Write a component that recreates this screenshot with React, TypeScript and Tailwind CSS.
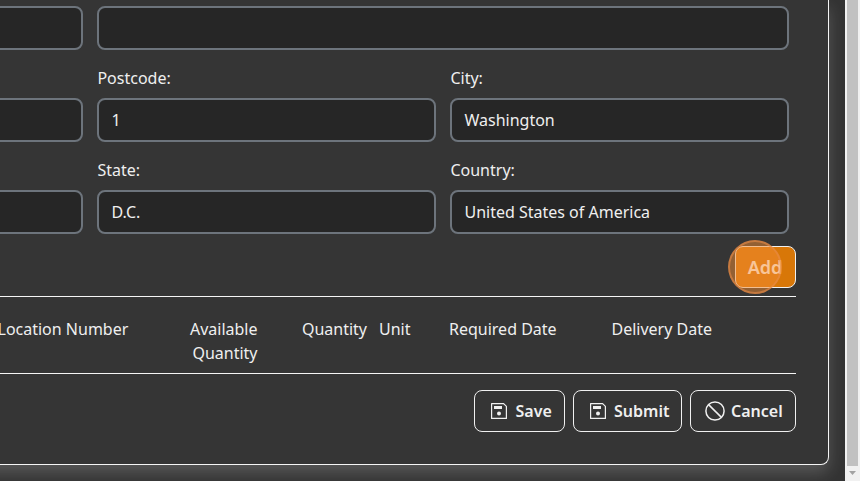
import React from "react";

function TextField({ label, value, className = "" }: { label?: string; value?: string; className?: string }) {
  return (
    <div className={className}>
      <div className="mb-2 h-6 whitespace-nowrap pl-[0.45px] leading-6">{label}</div>
      <div className="flex h-11 items-center rounded-lg border-2 border-[#6d747c] bg-[#262626] pr-3 pl-[12.45px]">{value}</div>
    </div>
  );
}

function SaveIcon() {
  return (
    <svg width="16" height="16" viewBox="0 0 16 16" fill="none" className="shrink-0">
      <path d="M.6 .6H12.6L15.4 3.4V15.4H.6Z" stroke="#f0f0f0" strokeWidth="1.2" strokeLinejoin="round" />
      <path d="M3 3h8v3H3z" fill="#f0f0f0" />
      <circle cx="8" cy="10.5" r="2" fill="#f0f0f0" />
    </svg>
  );
}

function CancelIcon() {
  return (
    <svg width="20" height="20" viewBox="0 0 20 20" fill="none" className="shrink-0">
      <circle cx="10" cy="10" r="9.1" stroke="#f0f0f0" strokeWidth="1.5" />
      <path d="M3.6 3.6 16.4 16.4" stroke="#f0f0f0" strokeWidth="1.5" />
    </svg>
  );
}

const button = "flex h-[42px] items-center rounded-lg border border-[#f0f0f0] font-semibold";

export default function App() {
  return (
    <div className="flex h-[481px] w-[860px] overflow-hidden bg-[#333333] font-['Noto_Sans',sans-serif] text-base leading-6 text-[#efefef]">
      <div className="h-full w-[845px] overflow-hidden">
        <main className="-ml-5 h-[465px] w-[849px] rounded-br-lg border-r border-b border-[#f5f5f5] bg-[#353535] pl-5 shadow-[0_8px_16px_rgba(255,255,255,0.18)]">
          <div className="w-[796px]">
            <div className="flex gap-3.5 pt-1.5">
              <div className="-ml-5 h-11 w-[103px] rounded-lg border-2 border-[#6d747c] bg-[#262626]" />
              <div className="h-11 w-[692px] rounded-lg border-2 border-[#6d747c] bg-[#262626]" />
            </div>
            <div className="mt-4 flex gap-3.5">
              <TextField className="-ml-5 w-[103px]" />
              <TextField className="w-[339px]" label="Postcode:" value="1" />
              <TextField className="w-[339px]" label="City:" value="Washington" />
            </div>
            <div className="mt-4 flex gap-3.5">
              <TextField className="-ml-5 w-[103px]" />
              <TextField className="w-[339px]" label="State:" value="D.C." />
              <TextField className="w-[339px]" label="Country:" value="United States of America" />
            </div>
            <div className="mt-3 flex justify-end">
              <div className="relative">
                <button className={button + " w-[61px] justify-center bg-[#d87708] pr-px text-lg text-white"}>
                  Add
                </button>
                <span className="absolute -top-1.5 -left-[7.5px] size-[54px] rounded-full border-2 border-[#e78b48]/60 bg-[#f28b31]/50" />
              </div>
            </div>
            <div className="mt-2 flex h-[78px] items-start whitespace-nowrap border-y border-[#f5f5f5] pt-5">
              <div className="-ml-[2.5px] w-[159px]">Location Number</div>
              <div className="w-[101px] text-right whitespace-normal">Available<br />Quantity</div>
              <div className="ml-[0.5px] w-[109px] text-right">Quantity</div>
              <div className="ml-3 w-[70px]">Unit</div>
              <div className="w-[162.5px]">Required Date</div>
              <div>Delivery Date</div>
            </div>
            <div className="mt-4 flex justify-end gap-2">
              <button className={button + " w-[91px] pl-4 gap-[8.5px]"}><SaveIcon />Save</button>
              <button className={button + " w-[109px] pl-4 gap-2"}><SaveIcon />Submit</button>
              <button className={button + " w-[106px] pl-3.5 gap-1.5"}><CancelIcon />Cancel</button>
            </div>
          </div>
        </main>
      </div>
      <div className="flex h-full w-[15px] flex-col items-center bg-[#f1f1f1]">
        <div className="h-[466px] w-[11px] bg-[#c1c1c1]" />
        <svg width="7" height="4" viewBox="0 0 7 4" className="mt-[5px]"><path d="M0 0h7L3.5 4Z" fill="#a3a3a3" /></svg>
      </div>
    </div>
  );
}
